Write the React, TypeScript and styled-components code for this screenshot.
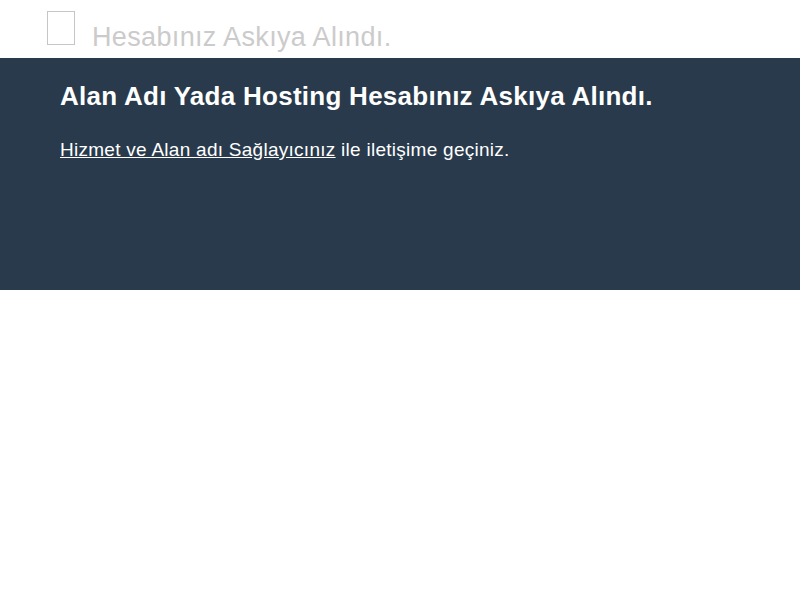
import React from "react";
import styled, { createGlobalStyle } from "styled-components";

const Global = createGlobalStyle`
  html, body { margin: 0; padding: 0; background: #ffffff; }
  body { font-family: "Liberation Sans", Arial, sans-serif; }
`;

const Header = styled.header`
  height: 58px;
  box-sizing: border-box;
  padding: 11px 0 0 47px;
  display: flex;
  align-items: flex-start;
  gap: 17px;
`;

const BrokenIcon = styled.span`
  display: block;
  width: 28px;
  height: 34px;
  box-sizing: border-box;
  border: 1px solid #c6c6c6;
`;

const AltText = styled.span`
  margin-top: 12px;
  font-size: 27px;
  line-height: 28px;
  letter-spacing: 0.35px;
  color: #cbcbcb;
  white-space: nowrap;
`;

const Band = styled.section`
  background: #283a4b;
  height: 232px;
  box-sizing: border-box;
  padding: 24px 60px 0;
  color: #ffffff;
`;

const Title = styled.h1`
  margin: 0;
  font-size: 26px;
  line-height: 28px;
  letter-spacing: 0.27px;
  font-weight: bold;
  white-space: nowrap;
`;

const Text = styled.p`
  margin: 29px 0 0;
  font-size: 19px;
  line-height: 22px;
  letter-spacing: 0.27px;
  white-space: nowrap;
`;

const Link = styled.a`
  color: #ffffff;
  text-decoration: underline;
`;

export default function App() {
  return (
    <>
      <Global />
      <Header>
        <BrokenIcon />
        <AltText>Hesabınız Askıya Alındı.</AltText>
      </Header>
      <Band>
        <Title>Alan Adı Yada Hosting Hesabınız Askıya Alındı.</Title>
        <Text>
          <Link href="#">Hizmet ve Alan adı Sağlayıcınız</Link> ile iletişime geçiniz.
        </Text>
      </Band>
    </>
  );
}
